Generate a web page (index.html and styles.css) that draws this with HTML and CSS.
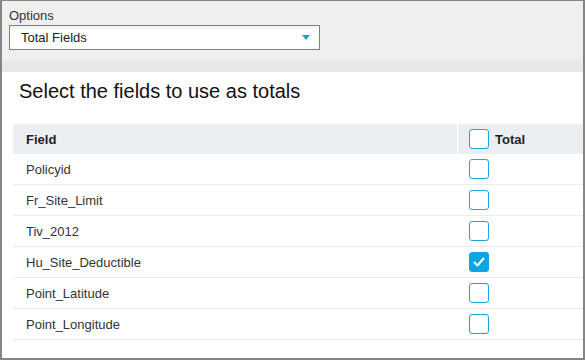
FILE: index.html
```html
<!DOCTYPE html>
<html lang="en">
<head>
  <meta charset="UTF-8">
  <title>Options - Total Fields</title>
  <link rel="stylesheet" href="styles.css">
</head>
<body>
  <div class="frame">
    <div class="options">
      <label class="options-label">Options</label>
      <div class="select">
        <span>Total Fields</span>
        <span class="caret"></span>
      </div>
    </div>

    <div class="content">
      <h2>Select the fields to use as totals</h2>

      <div class="fields">
        <div class="row head">
          <div class="cell name">Field</div>
          <div class="cell total"><span class="check"></span>Total</div>
        </div>
        <div class="row">
          <div class="cell name">Policyid</div>
          <div class="cell total"><span class="check"></span></div>
        </div>
        <div class="row">
          <div class="cell name">Fr_Site_Limit</div>
          <div class="cell total"><span class="check"></span></div>
        </div>
        <div class="row">
          <div class="cell name">Tiv_2012</div>
          <div class="cell total"><span class="check"></span></div>
        </div>
        <div class="row">
          <div class="cell name">Hu_Site_Deductible</div>
          <div class="cell total">
            <span class="check on">
              <svg width="12" height="10" viewBox="0 0 12 10"><path d="M1.5 5.5 L4.5 8.5 L10.5 1.5" fill="none" stroke="#fff" stroke-width="2" stroke-linecap="round" stroke-linejoin="round"/></svg>
            </span>
          </div>
        </div>
        <div class="row">
          <div class="cell name">Point_Latitude</div>
          <div class="cell total"><span class="check"></span></div>
        </div>
        <div class="row">
          <div class="cell name">Point_Longitude</div>
          <div class="cell total"><span class="check"></span></div>
        </div>
      </div>
    </div>
  </div>
</body>
</html>
```

FILE: styles.css
```css
body {
  margin: 0;
  font-family: 'Liberation Sans', Arial, sans-serif;
  color: #333;
}
.frame {
  width: 585px;
  height: 360px;
  box-sizing: border-box;
  border: 2px solid #858585;
  border-top-width: 1px;
  background: #fff;
  overflow: hidden;
}
.options {
  background: #efefef;
  border-bottom: 11px solid #e8e8e8;
  padding: 8px 7px 11px;
}
.options-label {
  display: block;
  font-size: 13px;
  line-height: 14px;
  color: #333;
  margin-bottom: 2px;
}
.select {
  width: 311px;
  height: 25px;
  box-sizing: border-box;
  border: 1px solid #1e9fd0;
  background: linear-gradient(#f1f1f1, #fff 5px);
  display: flex;
  align-items: center;
  justify-content: space-between;
  padding: 0 9px 0 11px;
  font-size: 13px;
  color: #222;
}
.caret {
  width: 0;
  height: 0;
  border-left: 4px solid transparent;
  border-right: 4px solid transparent;
  border-top: 5px solid #1a9fd8;
}
.content {
  padding: 7px 0 0 11px;
}
.content h2 {
  margin: 0 0 21px 6px;
  font-size: 20px;
  font-weight: normal;
  line-height: 24px;
  color: #111;
}
.row {
  display: flex;
  height: 30px;
  border-bottom: 1px solid #e9ecef;
  font-size: 13px;
}
.row.head {
  background: #eceff2;
  border-bottom: none;
  color: #222;
  font-weight: bold;
}
.cell {
  display: flex;
  align-items: center;
}
.name {
  width: 445px;
  padding-left: 13px;
  box-sizing: border-box;
  border-right: 1px solid #fff;
}
.total {
  flex: 1;
  padding-left: 11px;
  gap: 6px;
}
.check {
  width: 20px;
  height: 20px;
  box-sizing: border-box;
  border: 1px solid #1aa7e0;
  border-radius: 3px;
  background: #fff;
  display: flex;
  align-items: center;
  justify-content: center;
}
.check.on {
  background: #0ea5e3;
  border-color: #0ea5e3;
}
```
